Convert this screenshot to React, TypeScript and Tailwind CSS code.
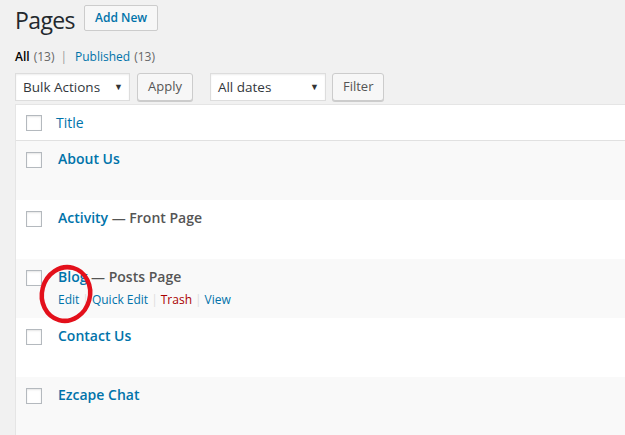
import React from "react";

const font = { fontFamily: '"Open Sans", "Noto Sans", sans-serif' };

const Checkbox = () => (
  <div className="w-4 h-4 shrink-0 border border-[#b4b9be] bg-white shadow-[inset_0_1px_2px_rgba(0,0,0,0.1)]" />
);

const Select = ({ label, width }: { label: string; width: string }) => (
  <div
    className={`${width} h-[28px] flex items-center justify-between bg-white border border-[#ddd] pl-[7px] pr-[6px] text-[13.5px] text-[#32373c] shadow-[inset_0_1px_2px_rgba(0,0,0,0.07)]`}
  >
    <span>{label}</span>
    <span className="text-[9px] text-[#333]">▼</span>
  </div>
);

const Button = ({ label }: { label: string }) => (
  <div className="h-[28px] flex items-center px-[10px] bg-[#f7f7f7] border border-[#ccc] rounded-[3px] text-[13px] text-[#555] shadow-[0_1px_0_#ccc]">
    {label}
  </div>
);

type Page = { title: string; state?: string; actions?: boolean };

const pages: Page[] = [
  { title: "About Us" },
  { title: "Activity", state: "Front Page" },
  { title: "Blog", state: "Posts Page", actions: true },
  { title: "Contact Us" },
  { title: "Ezcape Chat" },
];

const Sep = () => <span className="mx-[3px] text-[#ddd]">|</span>;

export default function App() {
  return (
    <div className="w-[625px] h-[435px] overflow-hidden bg-[#f1f1f1] pl-[15px]" style={font}>
      <div className="flex items-center gap-[9px] pt-[5px] h-[31px]">
        <h1 className="text-[23px] leading-[26px] pt-[3px] tracking-[-0.6px] text-[#23282d] font-normal">
          Pages
        </h1>
        <div className="h-[26px] flex items-center px-[10px] border border-[#ccc] bg-[#f7f7f7] rounded-[2px] text-[12px] font-semibold text-[#0073aa]">
          Add New
        </div>
      </div>

      <div className="mt-[16px] h-[20px] flex items-center text-[12px] text-[#666]">
        <span className="text-black font-semibold">All</span>
        <span className="ml-[4px]">(13)</span>
        <span className="ml-[6px] mr-[8px] text-[#999]">|</span>
        <span className="text-[#0073aa]">Published</span>
        <span className="ml-[4px]">(13)</span>
      </div>

      <div className="mt-[6px] flex items-center h-[28px]">
        <Select label="Bulk Actions" width="w-[115px]" />
        <div className="ml-[7px]">
          <Button label="Apply" />
        </div>
        <div className="ml-[17px]">
          <Select label="All dates" width="w-[116px]" />
        </div>
        <div className="ml-[6px]">
          <Button label="Filter" />
        </div>
      </div>

      <div className="relative mt-[3px] border-l border-t border-[#e5e5e5] bg-white">
        <div className="h-[36px] flex items-center border-b border-[#e1e1e1] pl-[10px]">
          <Checkbox />
          <span className="ml-[14px] text-[14px] text-[#0073aa]">Title</span>
        </div>
        {pages.map((p, i) => (
          <div
            key={p.title}
            className={`h-[59px] flex items-start pl-[10px] pt-[11px] ${i % 2 === 0 ? "bg-[#f9f9f9]" : "bg-white"}`}
          >
            <Checkbox />
            <div className="ml-[16px] -mt-[3px]">
              <div className="text-[14px] leading-[20px] font-semibold">
                <span className="text-[#0073aa]">{p.title}</span>
                {p.state && <span className="text-[#555]"> — {p.state}</span>}
              </div>
              {p.actions && (
                <div className="mt-[4px] text-[12px] leading-[18px] flex items-center">
                  <span className="text-[#0073aa]">Edit</span>
                  <Sep />
                  <span className="text-[#0073aa]">Quick Edit</span>
                  <Sep />
                  <span className="text-[#a00]">Trash</span>
                  <Sep />
                  <span className="text-[#0073aa]">View</span>
                </div>
              )}
            </div>
          </div>
        ))}
        <svg
          className="absolute left-[20px] top-[156px] pointer-events-none"
          width="60"
          height="66"
          viewBox="0 0 60 66"
        >
          <ellipse
            cx="30"
            cy="33"
            rx="24"
            ry="27"
            transform="rotate(15 30 33)"
            fill="none"
            stroke="#e3101b"
            strokeWidth="4.5"
          />
        </svg>
      </div>
    </div>
  );
}
